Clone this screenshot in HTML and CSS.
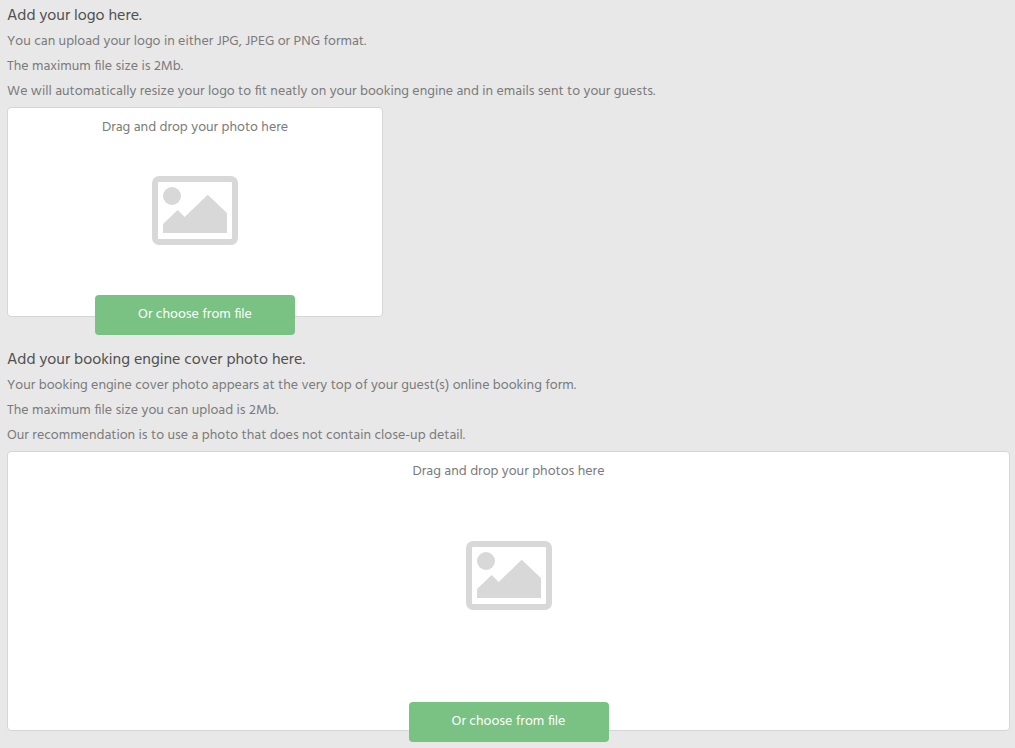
FILE: index.html
```html
<!DOCTYPE html>
<html lang="en">
<head>
<meta charset="utf-8">
<meta name="viewport" content="width=device-width, initial-scale=1">
<title>Upload photos</title>
<link rel="stylesheet" href="styles.css">
</head>
<body>
<main class="page">
  <section class="upload">
    <h2 class="title">Add your logo here.</h2>
    <p class="hint">You can upload your logo in either JPG, JPEG or PNG format.</p>
    <p class="hint">The maximum file size is 2Mb.</p>
    <p class="hint">We will automatically resize your logo to fit neatly on your booking engine and in emails sent to your guests.</p>
    <div class="drop drop-logo">
      <p class="drop-text">Drag and drop your photo here</p>
      <svg class="picture" viewBox="0 0 86 69" aria-hidden="true">
        <rect x="3" y="3" width="80" height="63" rx="4" fill="none" stroke="currentColor" stroke-width="6"/>
        <circle cx="20" cy="20" r="9"/>
        <path d="M11 57V48L25.700 34l7 7L55.700 18.700 75 37v20z"/>
      </svg>
      <button class="choose" type="button">Or choose from file</button>
    </div>
  </section>
  <section class="upload">
    <h2 class="title">Add your booking engine cover photo here.</h2>
    <p class="hint">Your booking engine cover photo appears at the very top of your guest(s) online booking form.</p>
    <p class="hint">The maximum file size you can upload is 2Mb.</p>
    <p class="hint">Our recommendation is to use a photo that does not contain close-up detail.</p>
    <div class="drop drop-cover">
      <p class="drop-text">Drag and drop your photos here</p>
      <svg class="picture" viewBox="0 0 86 69" aria-hidden="true">
        <rect x="3" y="3" width="80" height="63" rx="4" fill="none" stroke="currentColor" stroke-width="6"/>
        <circle cx="20" cy="20" r="9"/>
        <path d="M11 57V48L25.700 34l7 7L55.700 18.700 75 37v20z"/>
      </svg>
      <button class="choose" type="button">Or choose from file</button>
    </div>
  </section>
</main>
</body>
</html>
```
FILE: styles.css
```css
* { box-sizing: border-box; }
body {
  margin: 0;
  background: #e8e8e8;
  color: #7b7b7b;
  font-family: Hind, "Noto Sans", sans-serif;
  font-size: 14px;
}
.page { padding: 4px 5px 0 7px; }
.title {
  margin: 0;
  color: #505050;
  font-size: 16px;
  font-weight: 400;
  line-height: 25px;
}
.hint { margin: 0; line-height: 25px; }
.drop {
  display: flex;
  flex-direction: column;
  align-items: center;
  margin-top: 3px;
  padding-top: 7px;
  border: 1px solid #d6d6d6;
  border-radius: 4px;
  background: #fff;
}
.drop-logo { max-width: 376px; min-height: 210px; margin-bottom: 31px; }
.drop-cover { min-height: 280px; margin-bottom: 17px; }
.drop-text { margin: 0; line-height: 25px; }
.picture { width: 86px; height: 69px; color: #d8d8d8; fill: currentColor; }
.drop-logo .picture { margin-top: 36px; }
.drop-cover .picture { margin-top: 57px; }
.choose {
  width: 200px;
  height: 40px;
  margin-top: auto;
  padding: 0 0 2px;
  border: 0;
  border-radius: 4px;
  background: #79c283;
  color: #fff;
  font: inherit;
}
.drop-logo .choose { margin-bottom: -19px; }
.drop-cover .choose { margin-bottom: -12px; }
```
